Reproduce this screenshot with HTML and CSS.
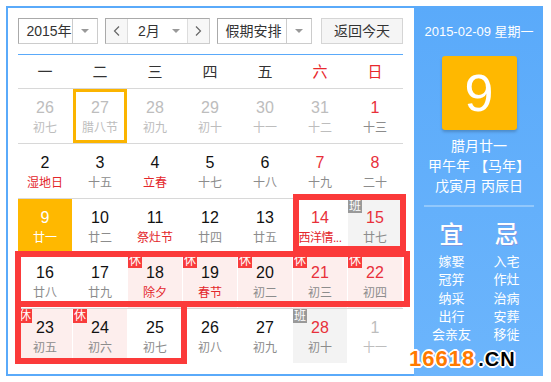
FILE: index.html
```html
<!DOCTYPE html>
<html>

<head>
  <title>万年历</title>
  <link rel="stylesheet" href="styles.css">
</head>

<body>
  <div class="calendar">
    <div class="main">
      <div class="toolbar">
        <div class="select year">
          <span class="select-text">2015年</span>
          <span class="select-arrow"><i class="caret"></i></span>
        </div>
        <div class="select month">
          <span class="nav"><svg width="7" height="10" viewBox="0 0 7 10"><polyline points="6,0.5 1.5,5 6,9.5" fill="none" stroke="#666" stroke-width="1.2"/></svg></span>
          <span class="month-text">2月<i class="caret"></i></span>
          <span class="nav"><svg width="7" height="10" viewBox="0 0 7 10"><polyline points="1,0.5 5.5,5 1,9.5" fill="none" stroke="#666" stroke-width="1.2"/></svg></span>
        </div>
        <div class="select holiday">
          <span class="select-text">假期安排</span>
          <span class="select-arrow"><i class="caret"></i></span>
        </div>
        <div class="today-btn">返回今天</div>
      </div>
      <div class="rule"></div>

      <div class="weekhead">
        <span>一</span><span>二</span><span>三</span><span>四</span><span>五</span>
        <span class="red">六</span><span class="red">日</span>
      </div>

      <div class="week">
        <div class="day prev"><div class="num">26</div><div class="lunar">初七</div></div>
        <div class="day prev picked"><div class="num">27</div><div class="lunar">腊八节</div></div>
        <div class="day prev"><div class="num">28</div><div class="lunar">初九</div></div>
        <div class="day prev"><div class="num">29</div><div class="lunar">初十</div></div>
        <div class="day prev"><div class="num">30</div><div class="lunar">十一</div></div>
        <div class="day prev"><div class="num">31</div><div class="lunar">十二</div></div>
        <div class="day weekend"><div class="num">1</div><div class="lunar">十三</div></div>
      </div>
      <div class="week">
        <div class="day"><div class="num">2</div><div class="lunar fest">湿地日</div></div>
        <div class="day"><div class="num">3</div><div class="lunar">十五</div></div>
        <div class="day"><div class="num">4</div><div class="lunar fest">立春</div></div>
        <div class="day"><div class="num">5</div><div class="lunar">十七</div></div>
        <div class="day"><div class="num">6</div><div class="lunar">十八</div></div>
        <div class="day weekend"><div class="num">7</div><div class="lunar">十九</div></div>
        <div class="day weekend"><div class="num">8</div><div class="lunar">二十</div></div>
      </div>
      <div class="week">
        <div class="day today"><div class="num">9</div><div class="lunar">廿一</div></div>
        <div class="day"><div class="num">10</div><div class="lunar">廿二</div></div>
        <div class="day"><div class="num">11</div><div class="lunar fest">祭灶节</div></div>
        <div class="day"><div class="num">12</div><div class="lunar">廿四</div></div>
        <div class="day"><div class="num">13</div><div class="lunar">廿五</div></div>
        <div class="day weekend"><div class="num">14</div><div class="lunar fest short">西洋情...</div></div>
        <div class="day weekend work"><span class="tag">班</span><div class="num">15</div><div class="lunar">廿七</div></div>
      </div>
      <div class="week">
        <div class="day"><div class="num">16</div><div class="lunar">廿八</div></div>
        <div class="day"><div class="num">17</div><div class="lunar">廿九</div></div>
        <div class="day rest"><span class="tag">休</span><div class="num">18</div><div class="lunar fest">除夕</div></div>
        <div class="day rest"><span class="tag">休</span><div class="num">19</div><div class="lunar fest">春节</div></div>
        <div class="day rest"><span class="tag">休</span><div class="num">20</div><div class="lunar">初二</div></div>
        <div class="day rest weekend"><span class="tag">休</span><div class="num">21</div><div class="lunar">初三</div></div>
        <div class="day rest weekend"><span class="tag">休</span><div class="num">22</div><div class="lunar">初四</div></div>
      </div>
      <div class="week">
        <div class="day rest"><span class="tag">休</span><div class="num">23</div><div class="lunar">初五</div></div>
        <div class="day rest"><span class="tag">休</span><div class="num">24</div><div class="lunar">初六</div></div>
        <div class="day"><div class="num">25</div><div class="lunar">初七</div></div>
        <div class="day"><div class="num">26</div><div class="lunar">初八</div></div>
        <div class="day"><div class="num">27</div><div class="lunar">初九</div></div>
        <div class="day weekend work"><span class="tag">班</span><div class="num">28</div><div class="lunar">初十</div></div>
        <div class="day next"><div class="num">1</div><div class="lunar">十一</div></div>
      </div>
    </div>

    <div class="side">
      <div class="side-date">2015-02-09 星期一</div>
      <div class="big-day">9</div>
      <div class="side-lunar">
        <div>腊月廿一</div>
        <div>甲午年 【马年】</div>
        <div>戊寅月 丙辰日</div>
      </div>
      <div class="side-rule"></div>
      <div class="advice">
        <div class="advice-col">
          <div class="advice-title">宜</div>
          <div class="advice-list">
            <div>嫁娶</div><div>冠笄</div><div>纳采</div><div>出行</div><div>会亲友</div>
          </div>
        </div>
        <div class="advice-col">
          <div class="advice-title">忌</div>
          <div class="advice-list">
            <div>入宅</div><div>作灶</div><div>治病</div><div>安葬</div><div>移徙</div>
          </div>
        </div>
      </div>
    </div>

    <!-- 红色标注框 -->
    <div class="mark mark-valentine"></div>
    <div class="mark mark-row"></div>
    <div class="mark mark-tail"></div>

    <div class="logo"><span class="logo-num">16618</span><span class="logo-cn">.CN</span></div>
  </div>
</body>

</html>
```

FILE: styles.css
```css
/* 万年历 */
body {
  margin: 0;
  font-family: "Liberation Sans", "Noto Sans CJK SC", sans-serif;
  background: #fff;
}

.calendar {
  position: relative;
  display: flex;
  width: 537px;
  height: 370px;
  margin: 6px 0 0 6px;
}

.main {
  width: 408px;
  box-sizing: border-box;
  border: 2px solid #5aaafa;
  border-right: none;
  padding: 10px 11px 0 10px;
  background: #fff;
}

/* 工具栏 */
.toolbar {
  display: flex;
  height: 26px;
  font-size: 14px;
  color: #333;
}

.select {
  display: flex;
  box-sizing: border-box;
  height: 26px;
  border: 1px solid #ccc;
  border-top-color: #aaa;
  border-left-color: #aaa;
  line-height: 24px;
}

.select.year {
  width: 80px;
}

.select.month {
  width: 105px;
  margin-left: 7px;
}

.select.holiday {
  width: 95px;
  margin-left: 7px;
}

.select-text {
  flex: 1;
  text-align: center;
  padding-left: 3px;
}

.select.year .select-text {
  padding-left: 7px;
}

.select-arrow {
  width: 24px;
  border-left: 1px solid #ccc;
  display: flex;
  align-items: center;
  justify-content: center;
}

.caret {
  display: inline-block;
  width: 0;
  height: 0;
  border-left: 4px solid transparent;
  border-right: 4px solid transparent;
  border-top: 4px solid #999;
}

.nav {
  width: 21px;
  display: flex;
  align-items: center;
  justify-content: center;
  background: #f7f7f7;
}

.month-text {
  flex: 1;
  display: flex;
  align-items: center;
  padding: 0 7px 0 10px;
  border-left: 1px solid #ddd;
  border-right: 1px solid #ddd;
}

.month-text .caret {
  margin-left: auto;
}

.today-btn {
  box-sizing: border-box;
  width: 82px;
  height: 26px;
  margin-left: 9px;
  border: 1px solid #d5d5d5;
  background: #f5f5f5;
  text-align: center;
  line-height: 24px;
}

.rule {
  height: 1px;
  margin-top: 10px;
  background: #5aaafa;
}

/* 日历网格 */
.weekhead,
.week {
  display: grid;
  grid-template-columns: repeat(7, 54px);
  column-gap: 1px;
}

.weekhead {
  height: 33px;
  line-height: 33px;
  text-align: center;
  font-size: 15px;
  color: #333;
  border-bottom: 1px solid #d8d8d8;
}

.weekhead .red {
  color: #e8282d;
}

.week {
  height: 54px;
}

.week + .week {
  border-top: 1px solid #d8d8d8;
}

.day {
  position: relative;
  box-sizing: border-box;
  height: 54px;
  padding-top: 9px;
  text-align: center;
}

.num {
  font-size: 16px;
  line-height: 20px;
  color: #111;
}

.lunar {
  font-size: 12px;
  line-height: 20px;
  color: #8c8c8c;
  white-space: nowrap;
}

.lunar.fest {
  color: #e3262b;
}

.lunar.short {
  letter-spacing: -0.5px;
}

.day.weekend .num {
  color: #e8303a;
}

.day.prev .num,
.day.prev .lunar,
.day.next .num,
.day.next .lunar {
  color: #bdbdbd;
}

.day.picked {
  outline: 3px solid #fbb400;
  outline-offset: -3px;
}

.day.today {
  background: #ffb800;
}

.day.today .num,
.day.today .lunar {
  color: #fff;
}

.day.rest {
  background: #fdeeed;
}

.day.work {
  background: #f3f3f3;
}

.tag {
  position: absolute;
  top: 0;
  left: 0;
  width: 14px;
  height: 14px;
  font-size: 12px;
  line-height: 14px;
  color: #fff;
  background: #f83c3c;
}

.day.work .tag {
  background: #999;
}

/* 右侧详情 */
.side {
  width: 129px;
  box-sizing: border-box;
  padding: 16px 9px 0 10px;
  background: linear-gradient(#5aaafa, #6cb5fc);
  color: #fff;
  text-align: center;
}

.side-date {
  font-size: 13px;
  line-height: 20px;
}

.big-day {
  width: 75px;
  height: 74px;
  margin: 14px auto 0;
  background: #ffb800;
  border-radius: 3px;
  box-shadow: 0 2px 3px rgba(0, 0, 0, 0.2);
  font-size: 52px;
  line-height: 74px;
}

.side-lunar {
  margin-top: 6px;
  font-size: 14px;
  line-height: 20px;
}

.side-rule {
  height: 2px;
  margin-top: 9px;
  background: rgba(255, 255, 255, 0.3);
}

.advice {
  display: flex;
  margin-top: 15px;
}

.advice-col {
  flex: 1;
}

.advice-title {
  font-size: 24px;
  line-height: 26px;
  font-weight: 500;
  text-shadow: 1px 1px 0 rgba(200, 80, 140, 0.25);
}

.advice-list {
  margin-top: 5px;
  font-size: 13px;
  line-height: 18.3px;
}

/* 标注框 */
.mark {
  position: absolute;
  box-sizing: border-box;
  border: 6px solid #fb3a3a;
}

.mark-valentine {
  left: 287px;
  top: 188px;
  width: 113px;
  height: 58px;
}

.mark-row {
  left: 9px;
  top: 245px;
  width: 395px;
  height: 56px;
}

.mark-tail {
  left: 9px;
  top: 295px;
  width: 172px;
  height: 63px;
}

.logo {
  position: absolute;
  left: 403px;
  top: 340px;
  font-size: 22px;
  font-weight: bold;
  line-height: 26px;
  letter-spacing: 1px;
  text-shadow: 2px 0 0 #fff, -2px 0 0 #fff, 0 2px 0 #fff, 0 -2px 0 #fff,
    1px 1px 0 #fff, -1px -1px 0 #fff, 1px -1px 0 #fff, -1px 1px 0 #fff;
}

.logo-num {
  color: #ff7a00;
}

.logo-cn {
  color: #000;
  margin-left: 3px;
  font-size: 20px;
}
```
